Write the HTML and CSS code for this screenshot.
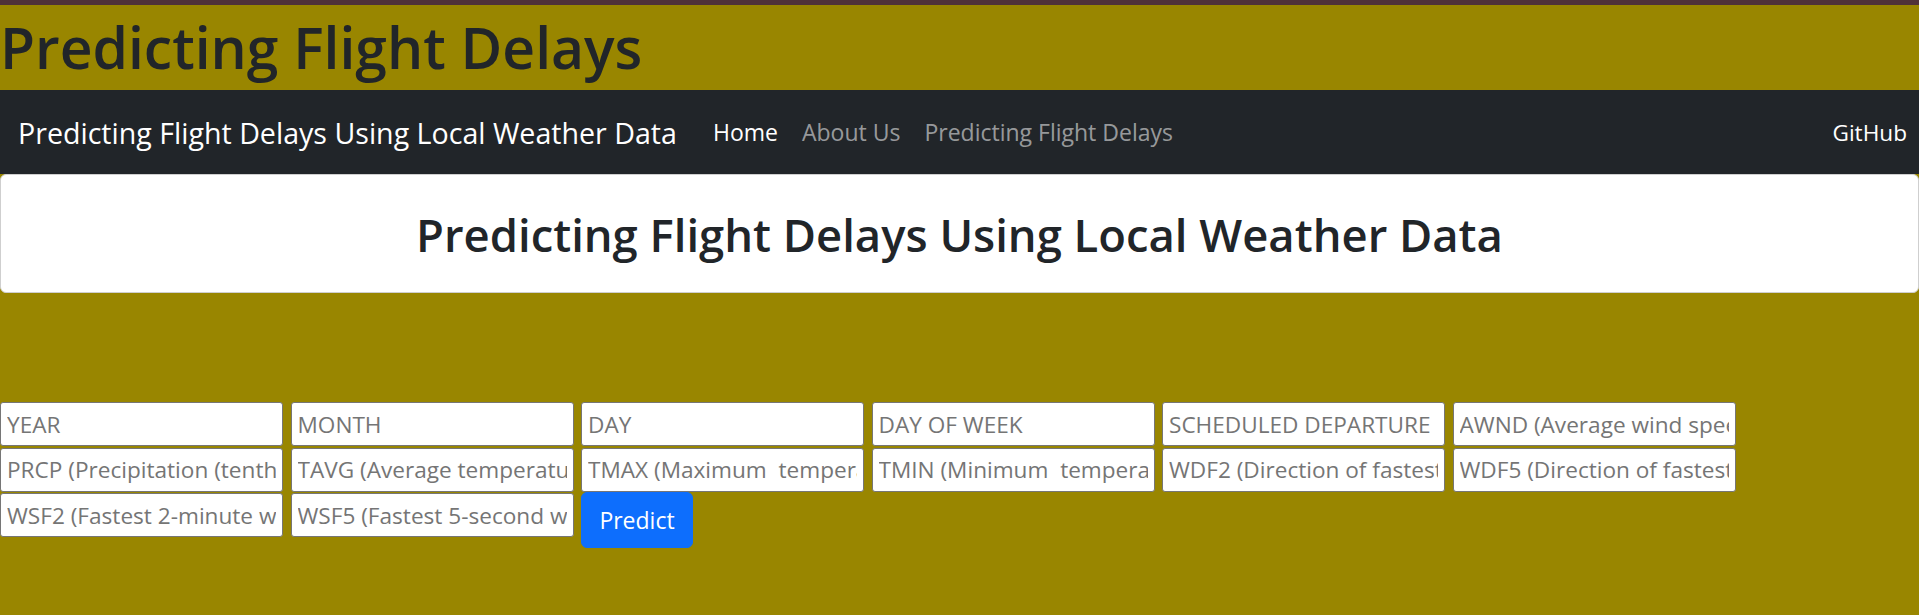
FILE: index.html
```html
<!DOCTYPE html>
<html lang="en">
<head>
<meta charset="utf-8">
<title>Predicting Flight Delays</title>
<link rel="stylesheet" href="styles.css">
</head>
<body>
<header class="site-header">
  <h1 class="site-title">Predicting Flight Delays</h1>
</header>
<nav class="navbar">
  <a class="brand" href="#">Predicting Flight Delays Using Local Weather Data</a>
  <ul class="nav-links">
    <li><a class="nav-link active" href="#">Home</a></li>
    <li><a class="nav-link" href="#">About Us</a></li>
    <li><a class="nav-link" href="#">Predicting Flight Delays</a></li>
  </ul>
  <a class="nav-link github" href="#">GitHub</a>
</nav>
<section class="card">
  <h2 class="card-title">Predicting Flight Delays Using Local Weather Data</h2>
</section>
<form class="predict-form">
  <input class="field" type="text" placeholder="YEAR">
  <input class="field" type="text" placeholder="MONTH">
  <input class="field" type="text" placeholder="DAY">
  <input class="field" type="text" placeholder="DAY OF WEEK">
  <input class="field" type="text" placeholder="SCHEDULED DEPARTURE">
  <input class="field" type="text" placeholder="AWND (Average wind speed)">
  <input class="field" type="text" placeholder="PRCP (Precipitation (tenths of mm))">
  <input class="field" type="text" placeholder="TAVG (Average temperature)">
  <input class="field" type="text" placeholder="TMAX (Maximum  temperature)">
  <input class="field" type="text" placeholder="TMIN (Minimum  temperature)">
  <input class="field" type="text" placeholder="WDF2 (Direction of fastest 2-minute wind)">
  <input class="field" type="text" placeholder="WDF5 (Direction of fastest 5-second wind)">
  <input class="field" type="text" placeholder="WSF2 (Fastest 2-minute wind speed)">
  <input class="field" type="text" placeholder="WSF5 (Fastest 5-second wind speed)">
  <button class="btn-predict" type="submit">Predict</button>
</form>
</body>
</html>
```
FILE: styles.css
```css
* { box-sizing: border-box; }
html, body { margin: 0; padding: 0; }
body {
  background: #998600;
  border-top: 5px solid #503239;
  font-family: "Open Sans", "Noto Sans", sans-serif;
  color: #212529;
  min-height: 615px;
}
.site-header { height: 85px; }
.site-title {
  margin: 0;
  font-size: 57px;
  font-weight: 600;
  line-height: 85px;
  color: #212529;
}
.navbar {
  height: 84px;
  background: #212529;
  display: flex;
  align-items: center;
  padding: 0 12px 0 18px;
}
.brand {
  color: #fff;
  text-decoration: none;
  font-size: 28.6px;
  margin-right: 36px;
}
.nav-links {
  list-style: none;
  margin: 0;
  padding: 0;
  display: flex;
  gap: 24px;
  flex: 1;
}
.nav-link {
  color: rgba(255,255,255,.55);
  text-decoration: none;
  font-size: 23px;
}
.nav-link.active, .nav-link.github { color: #fff; }
.nav-link.github { font-size: 22.6px; }
.card {
  background: #fff;
  border: 1px solid #cfcfcf;
  border-radius: 6px;
  height: 119px;
  display: flex;
  align-items: center;
  justify-content: center;
}
.card-title {
  margin: 0;
  font-size: 45.4px;
  font-weight: 600;
  color: #212529;
}
.predict-form {
  margin-top: 109px;
  display: flex;
  flex-wrap: wrap;
  column-gap: 7.5px;
  row-gap: 1.5px;
  align-items: flex-start;
  width: 1760px;
}
.field {
  width: 283px;
  height: 44px;
  border: 1px solid #767676;
  border-radius: 3px;
  padding: 0 6px;
  font-family: "Open Sans", "Noto Sans", sans-serif;
  font-size: 22.6px;
  color: #212529;
  background: #fff;
}
.field::placeholder { color: #757575; }
.btn-predict {
  margin-top: -1.5px;
  width: 112px;
  height: 56px;
  border: 1px solid #0d6efd;
  border-radius: 6px;
  background: #0d6efd;
  color: #fff;
  font-family: "Open Sans", "Noto Sans", sans-serif;
  font-size: 23px;
}
```
